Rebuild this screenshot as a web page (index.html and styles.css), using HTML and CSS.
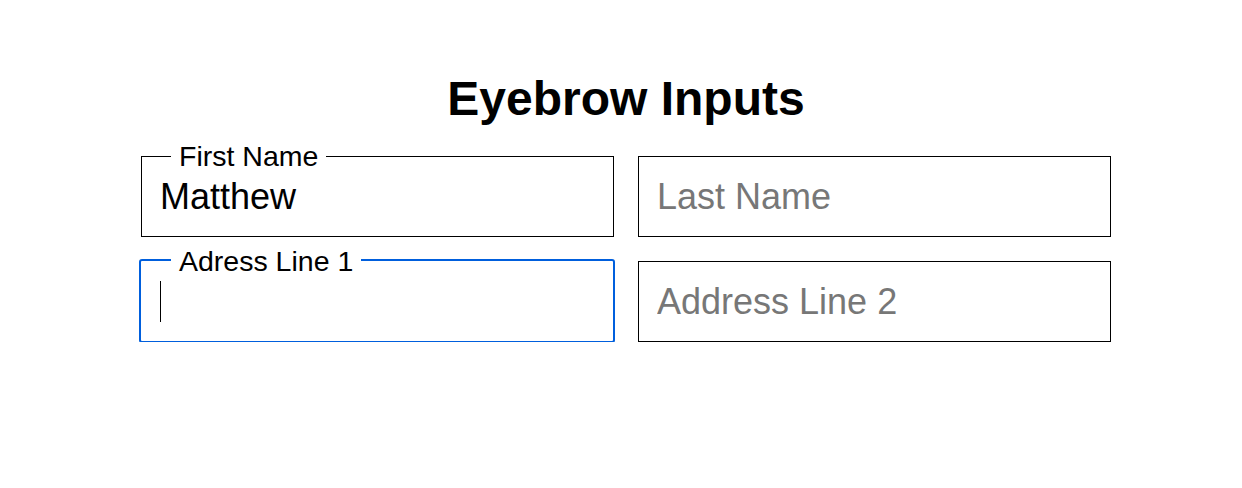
FILE: index.html
```html
<!DOCTYPE html>
<html lang="en">
<head>
<meta charset="utf-8">
<title>Eyebrow Inputs</title>
<link rel="stylesheet" href="styles.css">
</head>
<body>
  <main class="page">
    <h1 class="title">Eyebrow Inputs</h1>
    <div class="grid">
      <div class="field">
        <label class="eyebrow" for="first">First Name</label>
        <input class="input" id="first" type="text" value="Matthew">
      </div>
      <div class="field">
        <input class="input" type="text" placeholder="Last Name">
      </div>
      <div class="field field-focused">
        <label class="eyebrow" for="addr1">Adress Line 1</label>
        <input class="input" id="addr1" type="text">
        <span class="caret"></span>
      </div>
      <div class="field">
        <input class="input" type="text" placeholder="Address Line 2">
      </div>
    </div>
  </main>
</body>
</html>
```
FILE: styles.css
```css
html, body {
  margin: 0;
  padding: 0;
  background: #ffffff;
}

body {
  font-family: "Liberation Sans", Arial, sans-serif;
  color: #000000;
}

.page {
  box-sizing: border-box;
  width: 980px;
  margin: 0 auto;
  padding: 71px 0 0 10px;
}

.title {
  margin: 0;
  font-size: 48px;
  line-height: 55px;
  font-weight: 700;
  text-align: center;
}

.grid {
  margin-top: 30px;
  display: grid;
  grid-template-columns: 473px 473px;
  grid-auto-rows: 81px;
  gap: 24px;
}

.field {
  position: relative;
  box-sizing: border-box;
  border: 1px solid #000000;
  display: flex;
}

.field-focused {
  border: 2px solid #005fdd;
  border-radius: 3px;
  margin: -2px -1px -1px -2px;
}

.eyebrow {
  position: absolute;
  left: 29px;
  top: -17px;
  padding: 0 8px;
  background: #ffffff;
  font-size: 28.5px;
  line-height: 32px;
  color: #000000;
}

.field-focused .eyebrow {
  left: 30px;
  top: -16px;
}

.input {
  flex: 1;
  min-width: 0;
  border: 0;
  outline: none;
  margin: 0;
  padding: 0 18px;
  background: transparent;
  font-family: "Liberation Sans", Arial, sans-serif;
  font-size: 36px;
  color: #000000;
  caret-color: transparent;
}

.input::placeholder {
  color: #777777;
  opacity: 1;
}

.caret {
  position: absolute;
  left: 19px;
  top: 20px;
  width: 1px;
  height: 41px;
  background: #000000;
}
```
